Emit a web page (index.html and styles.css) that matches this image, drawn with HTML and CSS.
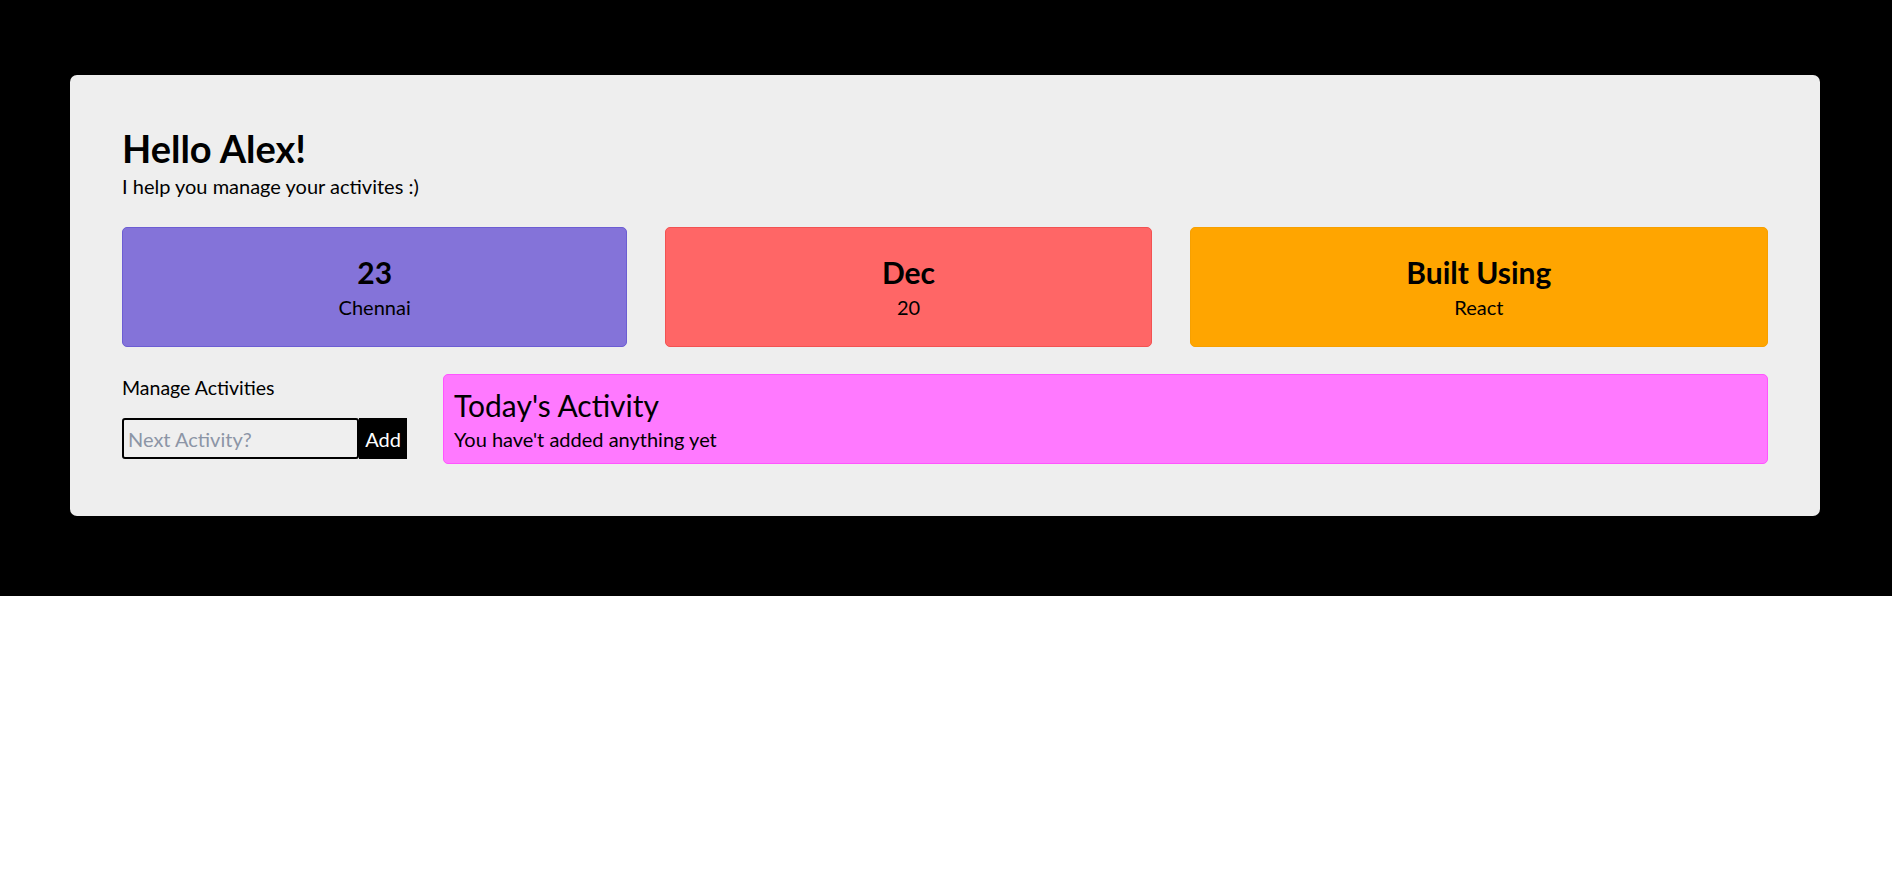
FILE: index.html
```html
<!DOCTYPE html>
<html lang="en">
<head>
<meta charset="utf-8">
<title>Activity Manager</title>
<link rel="stylesheet" href="styles.css">
</head>
<body>
  <div class="stage">
    <main class="panel">
      <header class="intro">
        <h1 class="intro-title">Hello Alex!</h1>
        <p class="intro-sub">I help you manage your activites :)</p>
      </header>

      <section class="stats">
        <div class="stat stat-purple">
          <h2 class="stat-value">23</h2>
          <p class="stat-label">Chennai</p>
        </div>
        <div class="stat stat-red">
          <h2 class="stat-value">Dec</h2>
          <p class="stat-label">20</p>
        </div>
        <div class="stat stat-orange">
          <h2 class="stat-value">Built Using</h2>
          <p class="stat-label">React</p>
        </div>
      </section>

      <section class="work">
        <div class="manage">
          <label class="manage-label" for="next">Manage Activities</label>
          <form class="add-form">
            <input id="next" class="add-input" type="text" placeholder="Next Activity?" autofocus>
            <button class="add-btn" type="button">Add</button>
          </form>
        </div>
        <div class="today">
          <h2 class="today-title">Today's Activity</h2>
          <p class="today-text">You have't added anything yet</p>
        </div>
      </section>
    </main>
  </div>
</body>
</html>
```

FILE: styles.css
```css
* { box-sizing: border-box; }

html, body {
  margin: 0;
  padding: 0;
  background: #fff;
}

body {
  font-family: Lato, "Open Sans", sans-serif;
  color: #000;
}

.stage {
  background: #000;
  padding: 75px 72px 80px 70px;
}

.panel {
  background: #eeeeee;
  border-radius: 7px;
  padding: 49px 52px 52px;
}

.intro-title {
  margin: 0;
  font-size: 38px;
  line-height: 49px;
  font-weight: 700;
}

.intro-sub {
  margin: 0;
  font-size: 20px;
  line-height: 27px;
}

.stats {
  display: flex;
  gap: 38px;
  margin-top: 27px;
}

.stat {
  flex: 1 1 auto;
  text-align: center;
  border: 1px solid;
  border-radius: 5px;
  padding: 24px 10px 25px;
}

.stat-value {
  margin: 0 0 2px;
  font-size: 30px;
  line-height: 40px;
  font-weight: 700;
}

.stat-label {
  margin: 0;
  font-size: 20px;
  line-height: 27px;
}

.stat-purple { background: #8473d9; border-color: #6c5dd3; }
.stat-red { background: #ff6666; border-color: #f25252; }
.stat-orange { background: #ffa500; border-color: #f7a000; }

.work {
  display: flex;
  align-items: flex-start;
  gap: 36px;
  margin-top: 27px;
}

.manage {
  flex: 0 0 285px;
  display: flex;
  flex-direction: column;
  gap: 17px;
}

.manage-label {
  font-size: 19.5px;
  line-height: 27px;
}

.add-form {
  display: flex;
  height: 41px;
}

.add-input {
  width: 237px;
  height: 41px;
  border: 2px solid #000;
  border-radius: 3px;
  background: #efefef;
  font-family: inherit;
  font-size: 20px;
  padding: 0 4px;
  color: #000;
  caret-color: #000;
}

.add-input:focus { outline: none; }

.add-input::placeholder { color: #8c95a6; }

.add-btn {
  width: 48px;
  height: 41px;
  border: none;
  background: #000;
  color: #fff;
  font-family: inherit;
  font-size: 20px;
  padding: 0;
}

.today {
  flex: 1 1 auto;
  background: #ff79ff;
  border: 1px solid #ff55ff;
  border-radius: 5px;
  padding: 9px 10px 10px;
}

.today-title {
  margin: 0;
  font-size: 30px;
  line-height: 42px;
  font-weight: 400;
}

.today-text {
  margin: 0;
  font-size: 20px;
  line-height: 27px;
}
```
